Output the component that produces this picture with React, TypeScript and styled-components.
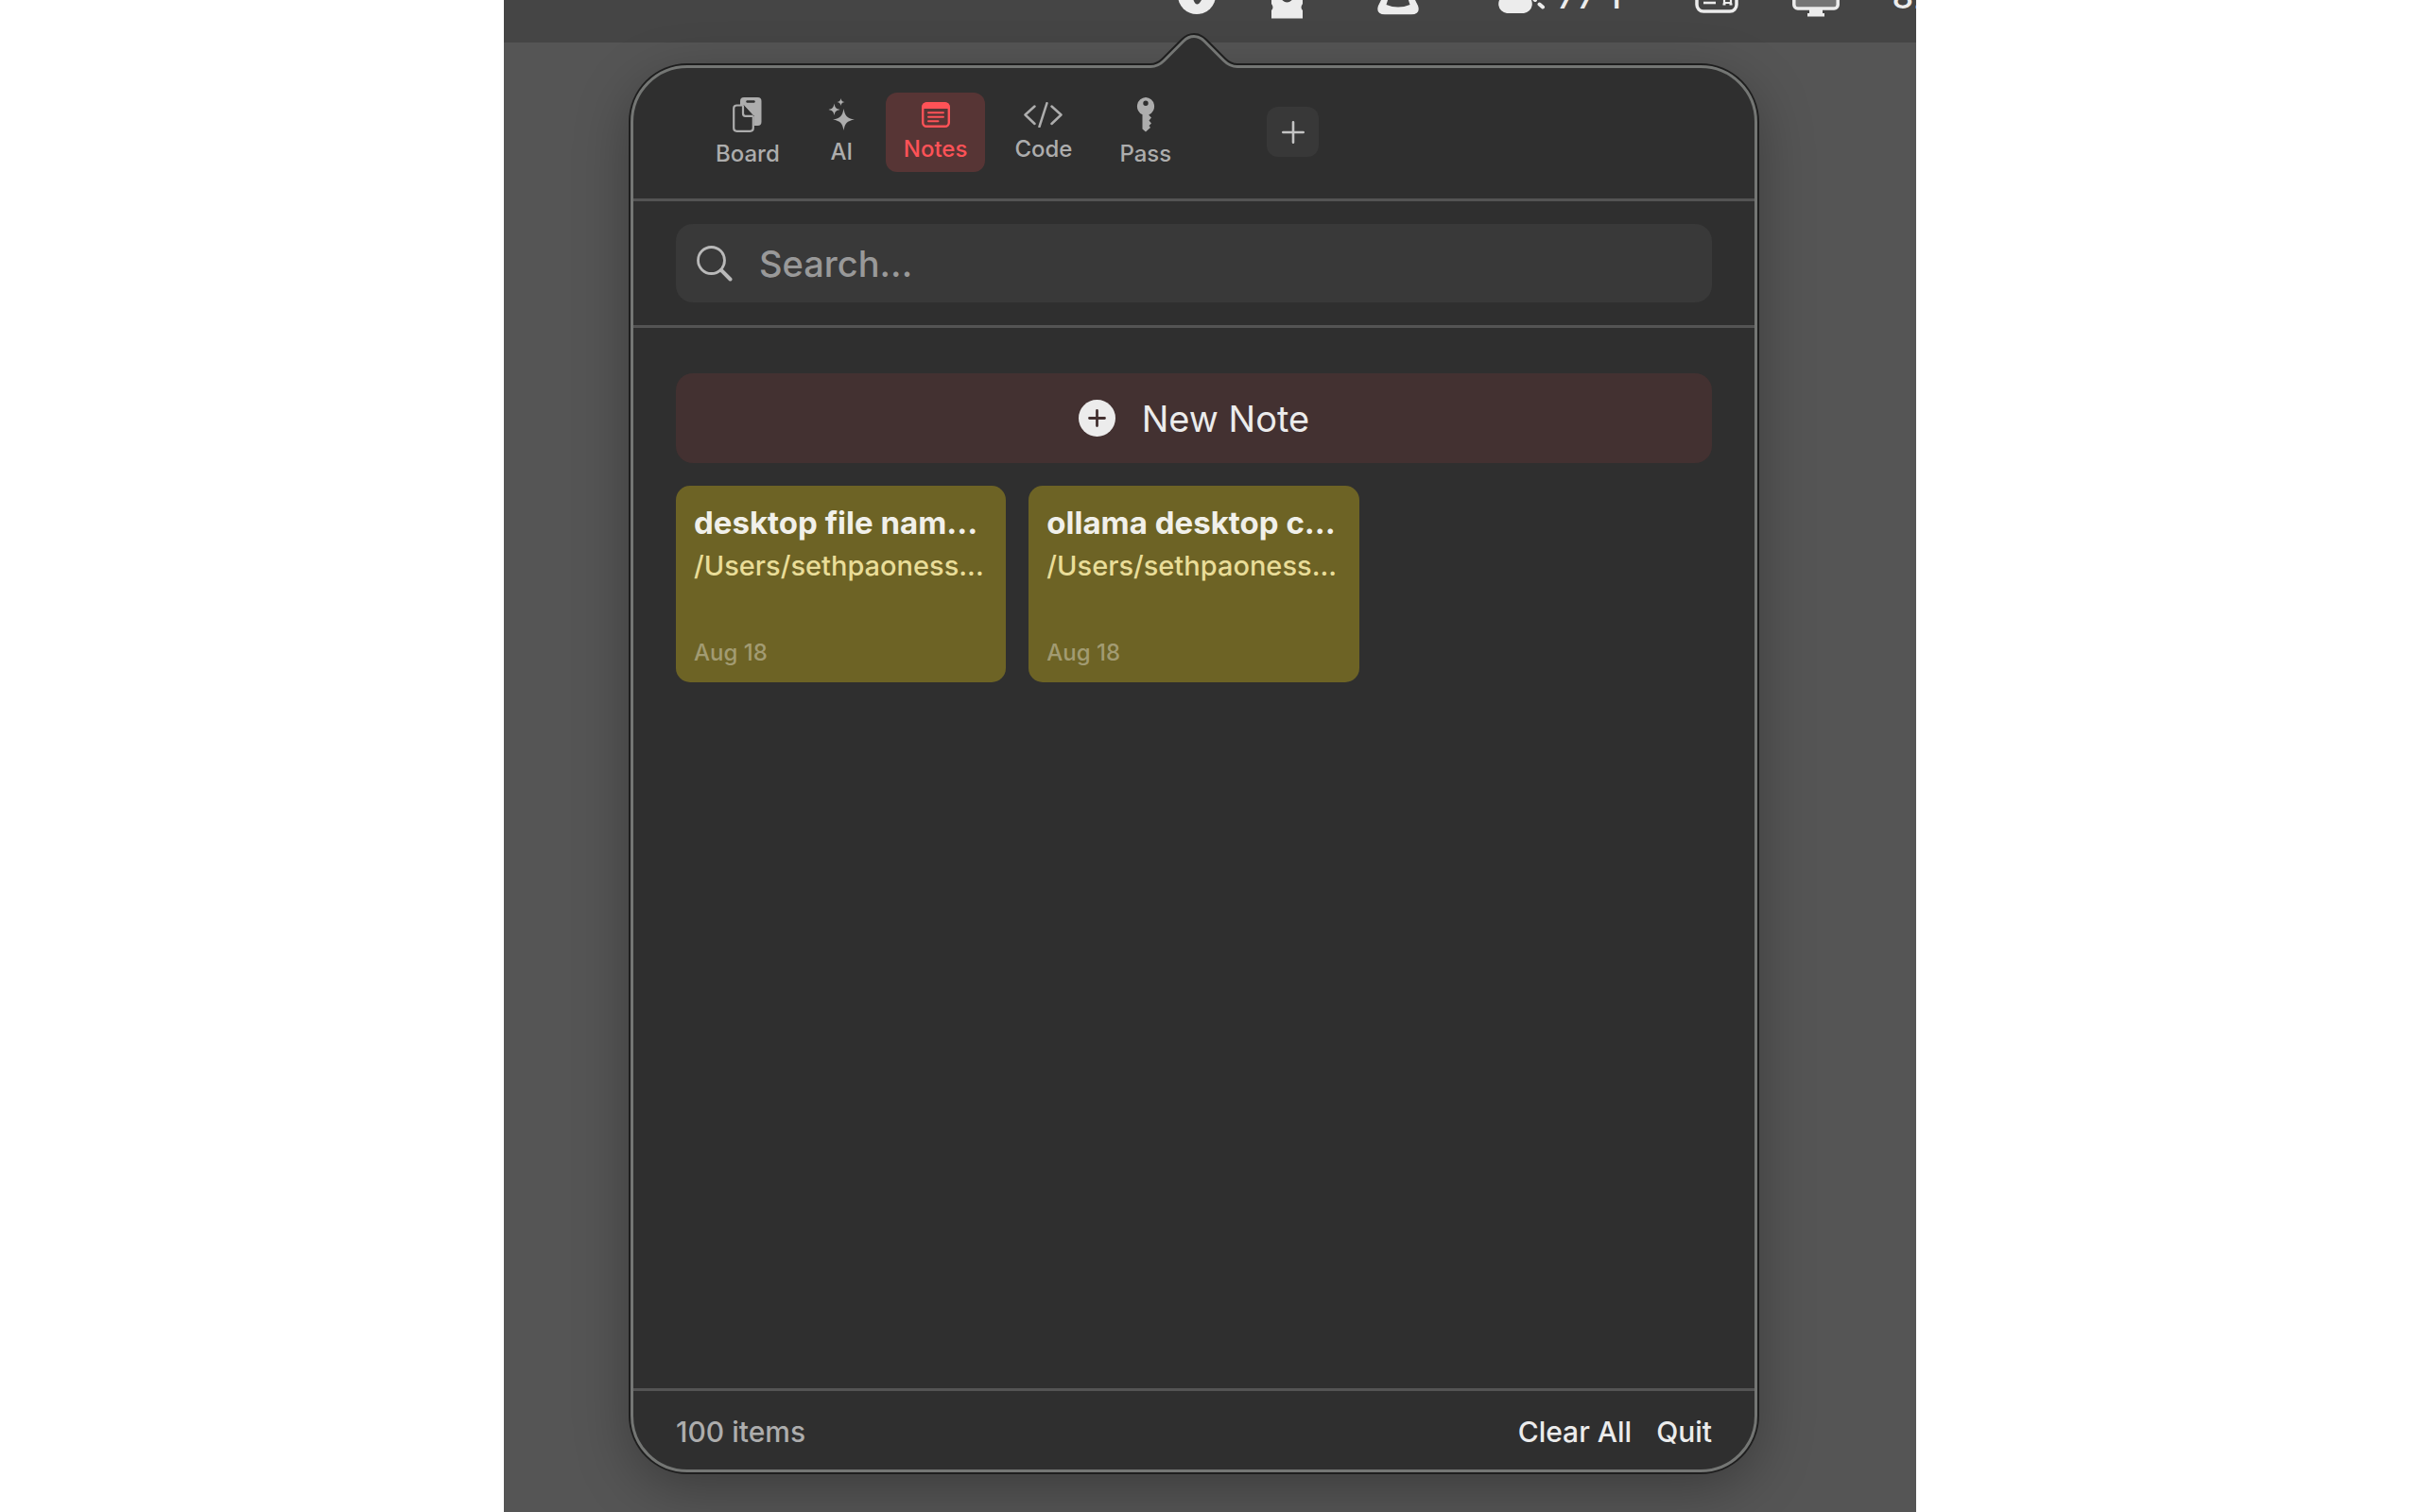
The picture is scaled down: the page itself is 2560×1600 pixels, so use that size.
import React from "react";
import styled, { createGlobalStyle } from "styled-components";

const color = {
  panel: "#2f2f2f",
  line: "#545454",
  rim: "#747674",
  field: "#393939",
  muted: "#adadad",
  bright: "#ececec",
  accent: "#ff5257",
};

const GlobalStyle = createGlobalStyle`
  *, *::before, *::after { box-sizing: border-box; }
  body {
    margin: 0;
    background: #fff;
    font-family: Inter, "Liberation Sans", sans-serif;
  }
  button, input { font: inherit; color: inherit; }
  svg { display: block; flex: none; }
`;

const Desktop = styled.main`
  display: flex;
  flex-direction: column;
  width: 100%;
  max-width: 1494px;
  min-height: 100vh;
  margin: 0 auto;
  overflow: hidden;
  background: #555;
`;

const MenuBar = styled.header`
  display: flex;
  align-items: center;
  gap: 56px;
  height: 98px;
  margin-top: -53px;
  padding-left: 713px;
  background: #454545;
  color: #ececec;
  font-size: 36px;
  font-weight: 500;
  white-space: nowrap;
`;

const Weather = styled.span`
  display: flex;
  align-items: center;
  gap: 12px;
`;

const PopoverArea = styled.div`
  flex: 1;
  display: flex;
  padding: 24px 168px 42px 134px;
`;

const Popover = styled.section`
  position: relative;
  flex: 1;
  display: flex;
  flex-direction: column;
  min-width: 0;
  border: 3px solid ${color.rim};
  border-radius: 60px;
  background: ${color.panel};
  box-shadow: 0 0 0 2px #1e1e1e, 0 16px 60px rgba(0, 0, 0, 0.3);
`;

const Arrow = styled.svg`
  position: absolute;
  left: 50%;
  bottom: 100%;
  margin: 0 0 0 -55px;
`;

const TabBar = styled.nav`
  display: flex;
  align-items: center;
  gap: 12px;
  height: 141px;
  padding: 0 68px 3px;
  border-bottom: 3px solid ${color.line};
`;

const Tab = styled.button<{ $active?: boolean }>`
  display: flex;
  flex-direction: column;
  align-items: center;
  gap: 8px;
  padding: 10px 19px 9px;
  border: 0;
  border-radius: 12px;
  background: ${(p) => (p.$active ? "#573535" : "transparent")};
  color: ${(p) => (p.$active ? color.accent : color.muted)};
  font-size: 24px;
  font-weight: 500;
  line-height: 30px;
`;

const AddButton = styled.button`
  display: grid;
  place-items: center;
  width: 55px;
  height: 53px;
  margin-left: 70px;
  padding: 0;
  border: 0;
  border-radius: 12px;
  background: #383838;
  color: #c4c4c4;
`;

const SearchRow = styled.div`
  padding: 24px 45px;
  border-bottom: 3px solid ${color.line};
`;

const SearchField = styled.label`
  display: flex;
  align-items: center;
  gap: 28px;
  height: 83px;
  padding: 0 22px;
  border-radius: 18px;
  background: ${color.field};
  color: #b9b9b9;
`;

const SearchInput = styled.input`
  flex: 1;
  min-width: 0;
  padding: 0;
  border: 0;
  outline: 0;
  background: transparent;
  font-size: 38px;
  font-weight: 500;
  line-height: 48px;
  &::placeholder { color: #999; opacity: 1; }
`;

const Content = styled.div`
  flex: 1;
  display: flex;
  flex-direction: column;
  gap: 24px;
  padding: 48px 45px;
`;

const NewNote = styled.button`
  display: flex;
  align-items: center;
  justify-content: center;
  gap: 28px;
  height: 95px;
  border: 0;
  border-radius: 18px;
  background: #433131;
  color: ${color.bright};
  font-size: 38px;
`;

const NoteGrid = styled.div`
  display: grid;
  grid-template-columns: repeat(3, minmax(0, 1fr));
  gap: 24px;
`;

const Note = styled.article`
  display: flex;
  flex-direction: column;
  height: 208px;
  padding: 19px 19px 17px;
  border-radius: 15px;
  background: #6d6325;
  white-space: nowrap;
`;

const NoteTitle = styled.h2`
  margin: 0 0 8px;
  color: #f1f0ea;
  font-size: 33px;
  font-weight: 700;
  line-height: 40px;
`;

const NoteBody = styled.p`
  margin: 0;
  color: #e9dd98;
  font-size: 29px;
  font-weight: 500;
  line-height: 36px;
`;

const NoteDate = styled.time`
  margin-top: auto;
  color: #a29b72;
  font-size: 24px;
  font-weight: 500;
  line-height: 28px;
`;

const Footer = styled.footer`
  display: flex;
  align-items: center;
  gap: 26px;
  height: 86px;
  padding: 2px 45px 0;
  border-top: 3px solid ${color.line};
  color: ${color.muted};
  font-size: 30px;
  font-weight: 500;
`;

const Count = styled.span`
  margin-right: auto;
`;

const FooterButton = styled.button`
  padding: 0;
  border: 0;
  background: none;
  color: ${color.bright};
`;

const ARROW =
  "M0 36.500H9C15 36.500 18.500 35 23.500 30L44 9.500C47.500 6 50.500 4.500 55 4.500S62.500 6 66 9.500L86.500 30C91.500 35 95 36.500 101 36.500H110";

const BoardIcon = () => (
  <svg width="31" height="37" viewBox="0 0 31 37">
    <path d="M12 0H26.500Q30.500 0 30.500 4V26Q30.500 30 26.500 30H23V20L12 8H8V4Q8 0 12 0Z" fill="currentColor" />
    <path d="M15.500 4.500H22.500" stroke="#2f2f2f" strokeWidth="2.400" strokeLinecap="round" />
    <path d="M4.500 8.500H11.500L21.500 20V32.500Q21.500 35.800 18.500 35.800H4.500Q1.200 35.800 1.200 32.500V11.500Q1.200 8.500 4.500 8.500Z" fill="#2f2f2f" />
    <path d="M11.500 8.500H4.500Q1.200 8.500 1.200 11.500V32.500Q1.200 35.800 4.500 35.800H18.500Q21.800 35.800 21.800 32.500V20M11 8.500V17Q11 19.800 13.500 19.800H21.800" fill="none" stroke="currentColor" strokeWidth="2.200" />
    <path d="M12 8 22.500 19.500 23 12 18 7Z" fill="currentColor" />
  </svg>
);

const SparkIcon = () => (
  <svg width="31" height="34" viewBox="0 0 31 34" fill="currentColor">
    <path d="M17.500 11C18.800 18.500 20.800 21 29 22.500C20.800 24 18.800 26.500 17.500 34C16.200 26.500 14.200 24 6 22.500C14.200 21 16.200 18.500 17.500 11Z" />
    <path d="M7.500 5.500C8.300 10 9.300 11 13.500 12C9.300 13 8.300 14 7.500 18C6.700 14 5.700 13 1.500 12C5.700 11 6.700 10 7.500 5.500Z" />
    <path d="M14.500 0C15.200 2.800 15.700 3.500 18.500 4C15.700 4.500 15.200 5.200 14.500 8C13.800 5.200 13.300 4.500 10.500 4C13.300 3.500 13.800 2.800 14.500 0Z" />
  </svg>
);

const NotesIcon = () => (
  <svg width="30" height="27" viewBox="0 0 30 27" fill="none" stroke="currentColor">
    <rect x="1.200" y="1.200" width="27.600" height="24.600" rx="4" strokeWidth="2.400" />
    <path d="M1 6.500V4.500Q1 1 4.500 1H25.500Q29 1 29 4.500V6.500Z" fill="currentColor" strokeWidth="1" />
    <path d="M7 11.300H23M7 15.700H23M7 20.300H17.500" strokeWidth="1.900" strokeLinecap="round" />
  </svg>
);

const CodeIcon = () => (
  <svg width="41" height="27" viewBox="0 0 41 27" fill="none" stroke="currentColor" strokeWidth="2.500" strokeLinecap="round" strokeLinejoin="round">
    <path d="M11.500 4.500 1.500 13.500 11.500 23M29.500 4.500 39.500 13.500 29.500 23M24.500 1.200 16.500 26" />
  </svg>
);

const KeyIcon = () => (
  <svg width="20" height="37" viewBox="0 0 20 37">
    <path fillRule="evenodd" d="M10 0A9.600 9.600 0 0 1 13.500 18.300V19L16 21.500 13.500 24.500 16 27.500 13.500 30 15 32 10 36.500 6.500 33.500V18.300A9.600 9.600 0 0 1 10 0ZM10 3.500A2.700 2.700 0 1 0 10 8.900 2.700 2.700 0 1 0 10 3.500Z" fill="currentColor" />
  </svg>
);

const PlusIcon = () => (
  <svg width="24" height="24" viewBox="0 0 24 24" stroke="currentColor" strokeWidth="2.600" strokeLinecap="round">
    <path d="M12 1.300V22.700M1.300 12H22.700" />
  </svg>
);

const SearchIcon = () => (
  <svg width="38" height="38" viewBox="0 0 38 38" fill="none" stroke="currentColor" strokeLinecap="round">
    <circle cx="15.500" cy="15.500" r="14" strokeWidth="2.800" />
    <path d="M26 26 35.500 35.500" strokeWidth="4" />
  </svg>
);

const PlusCircleIcon = () => (
  <svg width="39" height="39" viewBox="0 0 39 39">
    <circle cx="19.500" cy="19.500" r="19.500" fill="currentColor" />
    <path d="M19.500 11.500V27.500M11.500 19.500H27.500" stroke="#433131" strokeWidth="2.800" strokeLinecap="round" />
  </svg>
);

const tabs = [
  { label: "Board", icon: <BoardIcon /> },
  { label: "AI", icon: <SparkIcon /> },
  { label: "Notes", icon: <NotesIcon />, active: true },
  { label: "Code", icon: <CodeIcon /> },
  { label: "Pass", icon: <KeyIcon /> },
];

const notes = [
  { title: "desktop file nam...", body: "/Users/sethpaoness...", date: "Aug 18" },
  { title: "ollama desktop c...", body: "/Users/sethpaoness...", date: "Aug 18" },
];

export default function App() {
  return (
    <>
      <GlobalStyle />
      <Desktop>
        <MenuBar>
          <svg width="40" height="40" viewBox="0 0 40 40">
            <circle cx="20" cy="19" r="20" fill="currentColor" />
            <path d="M13 10H27L25 24Q20 33 16.500 24Z" fill="#454545" />
          </svg>
          <svg width="38" height="48" viewBox="0 0 38 48">
            <path d="M3 4H36V32Q33 36 36 39V47.500H3V39Q6 36 3 32Z" fill="currentColor" />
            <circle cx="19.500" cy="24" r="6.500" fill="#454545" />
          </svg>
          <svg width="91" height="40" viewBox="-7 0 91 40">
            <path d="M30 3H42Q50 3 52 20L57 30Q60 39 50 39.300H22Q12 39 15 30L20 20Q22 3 30 3Z" fill="currentColor" />
            <path d="M27 18H45L48.500 29Q36 34 23.500 29Z" fill="#454545" />
          </svg>
          <Weather>
            <svg width="52" height="38" viewBox="0 0 52 38">
              <path d="M11 37A10 10 0 0 1 8 18A13 13 0 0 1 32 18A10 10 0 0 1 29 37Z" fill="currentColor" />
              <path d="M40 22 41 23M45.500 27.500 49 30.500" stroke="currentColor" strokeWidth="4" strokeLinecap="round" />
            </svg>
            77°F
          </Weather>
          <svg width="57" height="36" viewBox="0 0 57 36" fill="none" stroke="currentColor">
            <rect x="12" y="2" width="42" height="32" rx="7" strokeWidth="3.500" />
            <path d="M19 25H32" strokeWidth="2.600" />
            <path d="M41 19V25H48V19M39.500 26.500H42.500M46.500 26.500H49.500" strokeWidth="2.200" />
          </svg>
          <svg width="50" height="44" viewBox="0 0 50 44">
            <rect x="1.800" y="2" width="46.400" height="33" rx="4" fill="#757575" stroke="currentColor" strokeWidth="3.500" />
            <path d="M18 35H32V40H34V43.500H16V40H18Z" fill="currentColor" />
          </svg>
          <span>82°</span>
        </MenuBar>
        <PopoverArea>
          <Popover>
            <Arrow width="110" height="38" viewBox="0 0 110 38" fill="none">
              <path d={ARROW} stroke="#1e1e1e" strokeWidth="7" />
              <path d={`${ARROW}V38H0Z`} fill={color.panel} />
              <path d={ARROW} stroke={color.rim} strokeWidth="3" />
            </Arrow>
            <TabBar>
              {tabs.map((t) => (
                <Tab key={t.label} type="button" $active={t.active}>
                  {t.icon}
                  {t.label}
                </Tab>
              ))}
              <AddButton type="button" aria-label="Add tab">
                <PlusIcon />
              </AddButton>
            </TabBar>
            <SearchRow>
              <SearchField>
                <SearchIcon />
                <SearchInput type="text" aria-label="Search" placeholder="Search..." />
              </SearchField>
            </SearchRow>
            <Content>
              <NewNote type="button">
                <PlusCircleIcon />
                New Note
              </NewNote>
              <NoteGrid>
                {notes.map((n) => (
                  <Note key={n.title}>
                    <NoteTitle>{n.title}</NoteTitle>
                    <NoteBody>{n.body}</NoteBody>
                    <NoteDate>{n.date}</NoteDate>
                  </Note>
                ))}
              </NoteGrid>
            </Content>
            <Footer>
              <Count>100 items</Count>
              <FooterButton type="button">Clear All</FooterButton>
              <FooterButton type="button">Quit</FooterButton>
            </Footer>
          </Popover>
        </PopoverArea>
      </Desktop>
    </>
  );
}
